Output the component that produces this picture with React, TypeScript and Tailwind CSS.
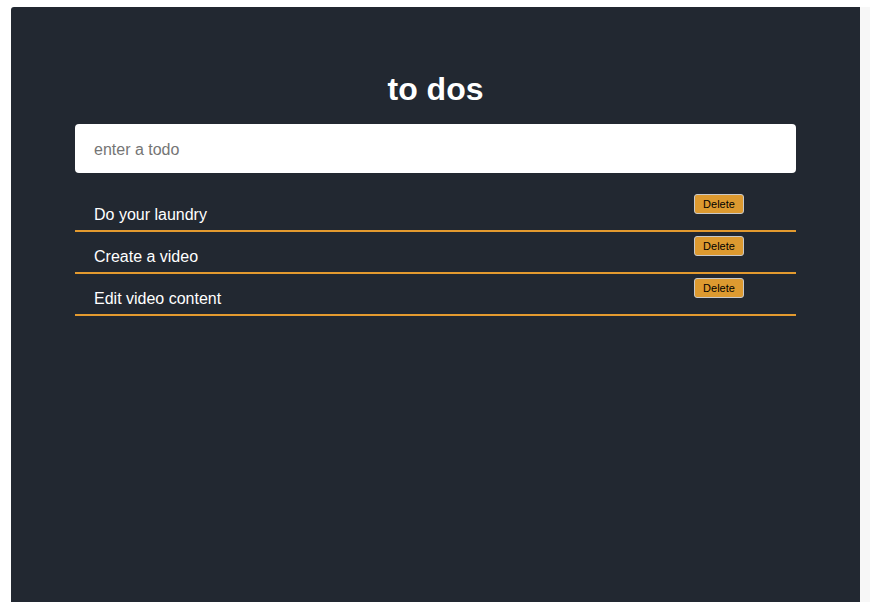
import React, { useState } from 'react';

const initialTodos = ['Do your laundry', 'Create a video', 'Edit video content'];

export default function App() {
  const [todos, setTodos] = useState<string[]>(initialTodos);
  const [text, setText] = useState('');

  const addTodo = (e: React.FormEvent) => {
    e.preventDefault();
    if (!text.trim()) return;
    setTodos([...todos, text.trim()]);
    setText('');
  };

  return (
    <div className="flex h-[602px] bg-white pt-[7px] font-['Liberation_Sans',Arial,sans-serif] overflow-hidden">
      <div className="w-[11px] bg-white" />
      {/* Main panel */}
      <div className="w-[849px] bg-[#222831] rounded-tl-[3px] pt-[64px] px-[64px]">
        <h1 className="text-center text-[32px] leading-[37px] font-bold text-white">to dos</h1>

        <form onSubmit={addTodo} className="mt-[16px]">
          <input
            type="text"
            value={text}
            onChange={(e) => setText(e.target.value)}
            placeholder="enter a todo"
            className="w-full h-[49px] rounded-[4px] bg-white px-[19px] pt-[2px] text-[16px] text-[#333] placeholder:text-[#757575] focus:outline-none"
          />
        </form>

        <ul className="mt-[17px]">
          {todos.map((todo, i) => (
            <li
              key={i}
              className="flex justify-between items-start h-[42px] border-b-2 border-[#e39a2f] pl-[19px] pr-[52px]"
            >
              <span className="pt-[16px] text-[16px] leading-[18px] text-white">{todo}</span>
              <button
                onClick={() => setTodos(todos.filter((_, j) => j !== i))}
                className="mt-[4px] w-[50px] h-[20px] rounded-[3px] border border-[#c9c9c9] bg-[#dd9a30] text-[11px] leading-none text-black"
              >
                Delete
              </button>
            </li>
          ))}
        </ul>
      </div>
      <div className="flex-1 bg-[#f7f7f7]" />
    </div>
  );
}
